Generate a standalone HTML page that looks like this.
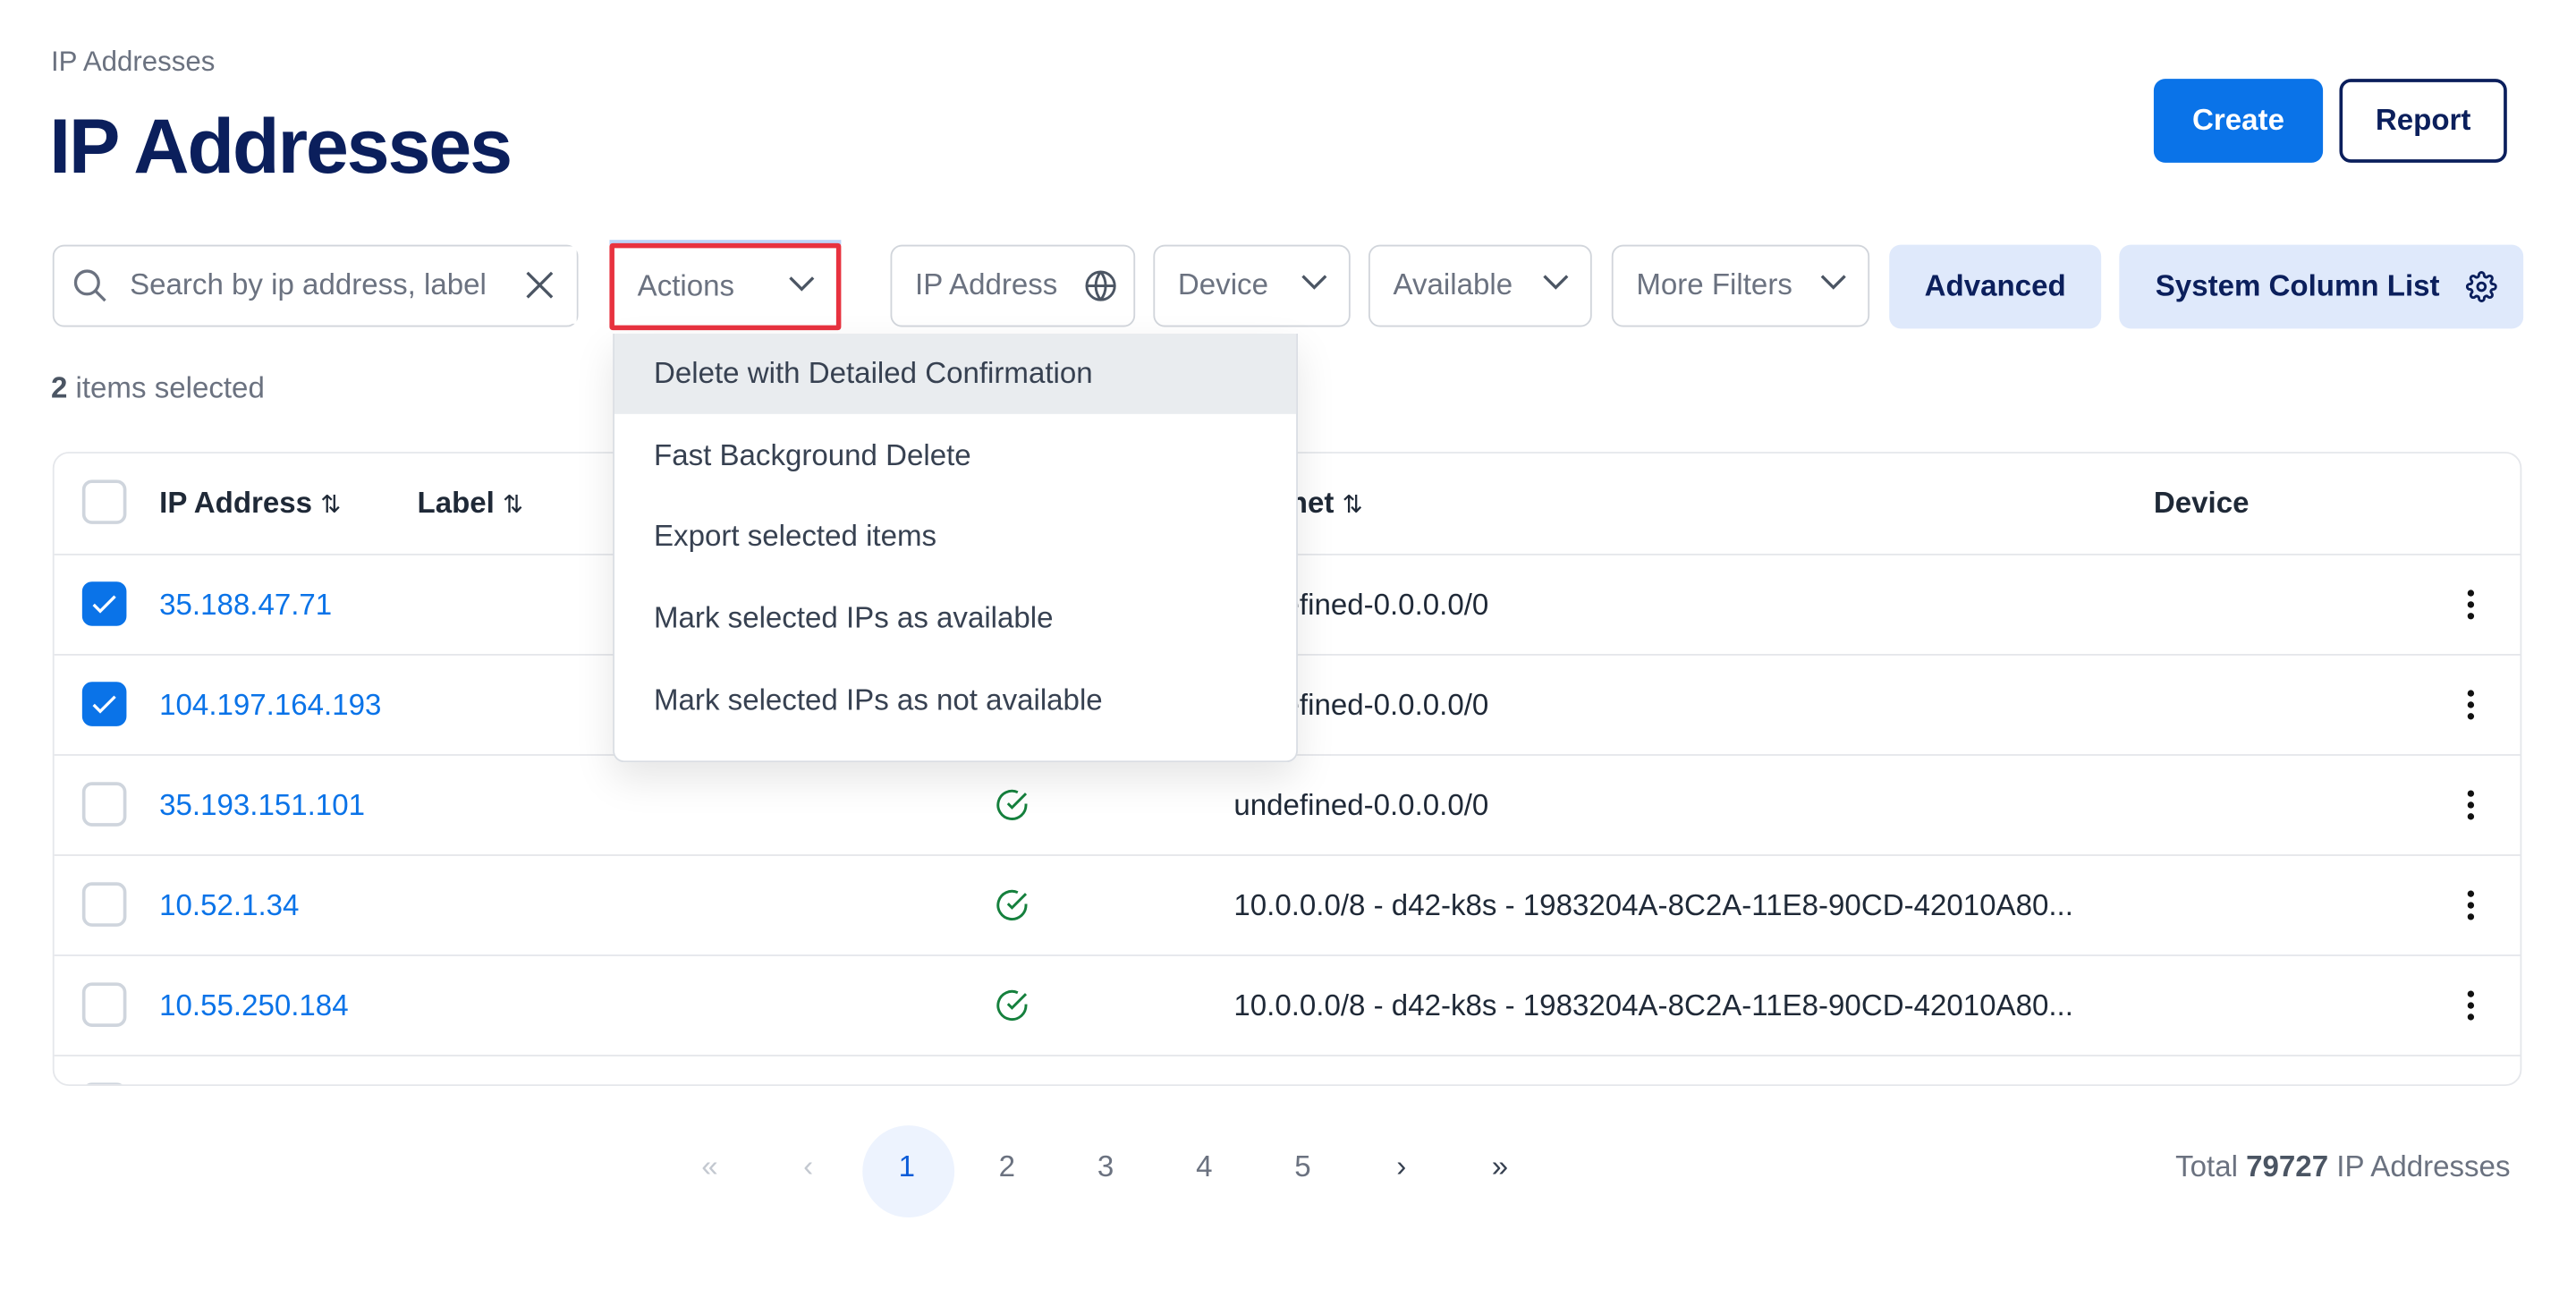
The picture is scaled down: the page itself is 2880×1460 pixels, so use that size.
<!DOCTYPE html>
<html><head><meta charset="utf-8"><style>
html,body{margin:0;padding:0;background:#fff;overflow:hidden}
body{width:2880px;height:1460px}
#s{position:absolute;left:0;top:0;width:1568px;height:795px;transform:scale(1.8367);transform-origin:0 0;font-family:"Liberation Sans",sans-serif;color:#111827}
.a{position:absolute}
.box{position:absolute;top:149px;height:50px;border:1.5px solid #d1d5db;border-radius:7px;box-sizing:border-box;background:#fff;font-size:18px;color:#6b7280;line-height:47px}
.box span{position:absolute;left:14px}
.chev{position:absolute;right:12px;top:16px}
.btnl{position:absolute;top:149px;height:51px;border-radius:7px;background:#dfe9fb;color:#0b1f5c;font-weight:bold;font-size:18px;line-height:51px;box-sizing:border-box}
.row{position:absolute;left:0;width:1503px;border-top:1.5px solid #e5e7eb;height:61px}
.cb{position:absolute;left:17px;top:16px;width:27px;height:27px;border:2px solid #cfd5dd;border-radius:6px;box-sizing:border-box;background:#fff}
.cb.on{background:#0a73e8;border-color:#0a73e8}
.ip{position:absolute;left:64px;top:20px;font-size:18px;color:#0a73e8}
.sub{position:absolute;left:718px;top:20px;font-size:18px;color:#1f2937}
.kb{position:absolute;left:1468px;top:20px}
.ok{position:absolute;left:572px;top:19px}
.mi{position:absolute;left:0;width:417px;height:49px;font-size:18px;color:#374151;line-height:49px;text-indent:24px}
.pg{position:absolute;top:700px;font-size:18px;color:#6b7280;width:30px;text-align:center;margin-left:-15px}
</style></head><body><div id="s">
<div class="a" style="left:31px;top:28px;font-size:17px;color:#6b7280">IP Addresses</div>
<div class="a" style="left:30px;top:61px;font-size:47px;font-weight:bold;color:#0b1f5c;letter-spacing:-1.2px">IP Addresses</div>
<div class="a" style="left:1311px;top:48px;width:103px;height:51px;background:#0a73e8;border-radius:7px;color:#fff;font-weight:bold;font-size:18px;line-height:51px;text-align:center">Create</div>
<div class="a" style="left:1424px;top:48px;width:102px;height:51px;border:2px solid #0b1f5c;border-radius:7px;box-sizing:border-box;color:#0b1f5c;font-weight:bold;font-size:18px;line-height:47px;text-align:center">Report</div>

<div class="box" style="left:32px;width:320px"><svg class="a" style="left:11px;top:13px" width="22" height="22" viewBox="0 0 22 22" fill="none" stroke="#6b7280" stroke-width="1.8"><circle cx="9" cy="9" r="7"/><path d="M14 14l6 6"/></svg><span style="left:46px;color:#6b7280">Search by ip address, label</span><div class="a" style="right:0;top:0;width:44px;height:47px;background:#fff"></div><svg class="a" style="right:14px;top:15px" width="17" height="17" viewBox="0 0 17 17" stroke="#4b5563" stroke-width="1.8"><path d="M1 1l15 15M16 1L1 16"/></svg></div>

<div class="a" style="left:371px;top:146px;width:141px;height:56px;border-top:3px solid #bcd3f7;box-sizing:border-box"></div>
<div class="box" style="left:371px;top:148px;width:141px;height:53px;border:3px solid #e8323f;border-radius:2px;line-height:47px"><span style="left:14px">Actions</span><svg class="chev" width="18" height="12" viewBox="0 0 18 12" fill="none" stroke="#4b5563" stroke-width="1.8"><path d="M2 2l7 7 7-7"/></svg></div>

<div class="box" style="left:542px;width:149px"><span>IP Address</span><svg class="a" style="right:10px;top:14px" width="20" height="20" viewBox="0 0 20 20" fill="none" stroke="#4b5563" stroke-width="1.6"><circle cx="10" cy="10" r="8.5"/><path d="M1.5 10h17M10 1.5c-4 5-4 12 0 17M10 1.5c4 5 4 12 0 17"/></svg></div>
<div class="box" style="left:702px;width:120px"><span>Device</span><svg class="chev" width="18" height="12" viewBox="0 0 18 12" fill="none" stroke="#4b5563" stroke-width="1.8"><path d="M2 2l7 7 7-7"/></svg></div>
<div class="box" style="left:833px;width:136px"><span>Available</span><svg class="chev" width="18" height="12" viewBox="0 0 18 12" fill="none" stroke="#4b5563" stroke-width="1.8"><path d="M2 2l7 7 7-7"/></svg></div>
<div class="box" style="left:981px;width:157px"><span>More Filters</span><svg class="chev" width="18" height="12" viewBox="0 0 18 12" fill="none" stroke="#4b5563" stroke-width="1.8"><path d="M2 2l7 7 7-7"/></svg></div>
<div class="btnl" style="left:1150px;width:129px;text-align:center">Advanced</div>
<div class="btnl" style="left:1290px;width:246px;padding-left:22px">System Column List<svg class="a" style="right:16px;top:16px" width="19" height="19" viewBox="0 0 24 24" fill="none" stroke="#0b1f5c" stroke-width="2"><circle cx="12" cy="12" r="3"/><path d="M19.4 15a1.65 1.65 0 00.33 1.82l.06.06a2 2 0 11-2.830 2.83l-.06-.06a1.65 1.65 0 00-1.82-.33 1.65 1.65 0 00-1 1.51V21a2 2 0 11-4 0v-.09A1.65 1.65 0 009 19.4a1.65 1.65 0 00-1.82.33l-.06.06a2 2 0 11-2.83-2.83l.06-.06A1.65 1.65 0 004.68 15a1.65 1.65 0 00-1.51-1H3a2 2 0 110-4h.09A1.65 1.65 0 004.6 9a1.65 1.65 0 00-.33-1.82l-.06-.06a2 2 0 112.83-2.83l.06.06A1.65 1.65 0 009 4.68a1.65 1.65 0 001-1.51V3a2 2 0 114 0v.09a1.65 1.65 0 001 1.51 1.65 1.65 0 001.82-.33l.06-.06a2 2 0 112.83 2.83l-.06.06A1.65 1.65 0 0019.4 9a1.65 1.65 0 001.51 1H21a2 2 0 110 4h-.09a1.65 1.65 0 00-1.51 1z"/></svg></div>

<div class="a" style="left:31px;top:226px;font-size:18px;color:#6b7280"><b style="color:#4b5563">2</b> items selected</div>

<div class="a" style="left:32px;top:275px;width:1503px;height:386px;border:1.5px solid #e5e7eb;border-radius:10px;overflow:hidden;box-sizing:border-box">
 <div class="a" style="left:0;top:0;width:1503px;height:61px">
  <div class="cb"></div>
  <div class="a" style="left:64px;top:20px;font-size:18px;font-weight:bold;color:#1f2937">IP Address <span style="font-weight:normal;font-size:15px">⇅</span></div>
  <div class="a" style="left:221px;top:20px;font-size:18px;font-weight:bold;color:#1f2937">Label <span style="font-weight:normal;font-size:15px">⇅</span></div>
  <div class="a" style="left:718px;top:20px;font-size:18px;font-weight:bold;color:#1f2937">Subnet <span style="font-weight:normal;font-size:15px">⇅</span></div>
  <div class="a" style="left:1278px;top:20px;font-size:18px;font-weight:bold;color:#1f2937">Device</div>
 </div>
 <div class="row" style="top:61px"><div class="cb on"><svg width="23" height="23" viewBox="0 0 23 23" fill="none" stroke="#fff" stroke-width="1.8"><path d="M5 12l4 4 9-9"/></svg></div><div class="ip">35.188.47.71</div><div class="sub">undefined-0.0.0.0/0</div><svg class="kb" width="6" height="20"><circle cx="3" cy="3" r="2" fill="#111"/><circle cx="3" cy="10" r="2" fill="#111"/><circle cx="3" cy="17" r="2" fill="#111"/></svg></div>
 <div class="row" style="top:122px"><div class="cb on"><svg width="23" height="23" viewBox="0 0 23 23" fill="none" stroke="#fff" stroke-width="1.8"><path d="M5 12l4 4 9-9"/></svg></div><div class="ip">104.197.164.193</div><div class="sub">undefined-0.0.0.0/0</div><svg class="kb" width="6" height="20"><circle cx="3" cy="3" r="2" fill="#111"/><circle cx="3" cy="10" r="2" fill="#111"/><circle cx="3" cy="17" r="2" fill="#111"/></svg></div>
 <div class="row" style="top:183px"><div class="cb"></div><div class="ip">35.193.151.101</div><svg class="ok" width="22" height="22" viewBox="0 0 22 22" fill="none" stroke="#15803d" stroke-width="1.6"><path d="M19.5 10.2V11a8.5 8.5 0 11-5-7.8"/><path d="M19.5 4L11 12.5 8.5 10"/></svg><div class="sub">undefined-0.0.0.0/0</div><svg class="kb" width="6" height="20"><circle cx="3" cy="3" r="2" fill="#111"/><circle cx="3" cy="10" r="2" fill="#111"/><circle cx="3" cy="17" r="2" fill="#111"/></svg></div>
 <div class="row" style="top:244px"><div class="cb"></div><div class="ip">10.52.1.34</div><svg class="ok" width="22" height="22" viewBox="0 0 22 22" fill="none" stroke="#15803d" stroke-width="1.6"><path d="M19.5 10.2V11a8.5 8.5 0 11-5-7.8"/><path d="M19.5 4L11 12.5 8.5 10"/></svg><div class="sub">10.0.0.0/8 - d42-k8s - 1983204A-8C2A-11E8-90CD-42010A80...</div><svg class="kb" width="6" height="20"><circle cx="3" cy="3" r="2" fill="#111"/><circle cx="3" cy="10" r="2" fill="#111"/><circle cx="3" cy="17" r="2" fill="#111"/></svg></div>
 <div class="row" style="top:305px"><div class="cb"></div><div class="ip">10.55.250.184</div><svg class="ok" width="22" height="22" viewBox="0 0 22 22" fill="none" stroke="#15803d" stroke-width="1.6"><path d="M19.5 10.2V11a8.5 8.5 0 11-5-7.8"/><path d="M19.5 4L11 12.5 8.5 10"/></svg><div class="sub">10.0.0.0/8 - d42-k8s - 1983204A-8C2A-11E8-90CD-42010A80...</div><svg class="kb" width="6" height="20"><circle cx="3" cy="3" r="2" fill="#111"/><circle cx="3" cy="10" r="2" fill="#111"/><circle cx="3" cy="17" r="2" fill="#111"/></svg></div>
 <div class="row" style="top:366px"><div class="cb"></div></div>
</div>

<div class="a" style="left:373px;top:203px;width:417px;height:261px;background:#fff;border:1px solid #d9dde3;border-top:none;border-radius:0 0 7px 7px;box-shadow:0 10px 24px rgba(0,0,0,0.10);box-sizing:border-box;overflow:hidden">
 <div class="mi" style="top:0;background:#e9ecef">Delete with Detailed Confirmation</div>
 <div class="mi" style="top:50px">Fast Background Delete</div>
 <div class="mi" style="top:99px">Export selected items</div>
 <div class="mi" style="top:149px">Mark selected IPs as available</div>
 <div class="mi" style="top:199px">Mark selected IPs as not available</div>
</div>

<div class="a" style="left:525px;top:685px;width:56px;height:56px;border-radius:50%;background:#edf3fe"></div>
<div class="pg" style="left:432px;color:#c3c8d0">«</div>
<div class="pg" style="left:492px;color:#c3c8d0">‹</div>
<div class="pg" style="left:552px;color:#0a5bd8">1</div>
<div class="pg" style="left:613px">2</div>
<div class="pg" style="left:673px">3</div>
<div class="pg" style="left:733px">4</div>
<div class="pg" style="left:793px">5</div>
<div class="pg" style="left:853px;color:#374151">›</div>
<div class="pg" style="left:913px;color:#374151">»</div>
<div class="a" style="left:1306px;top:700px;width:222px;text-align:right;font-size:18px;color:#6b7280;white-space:nowrap">Total <b style="color:#4b5563">79727</b> IP Addresses</div>
</div></body></html>
